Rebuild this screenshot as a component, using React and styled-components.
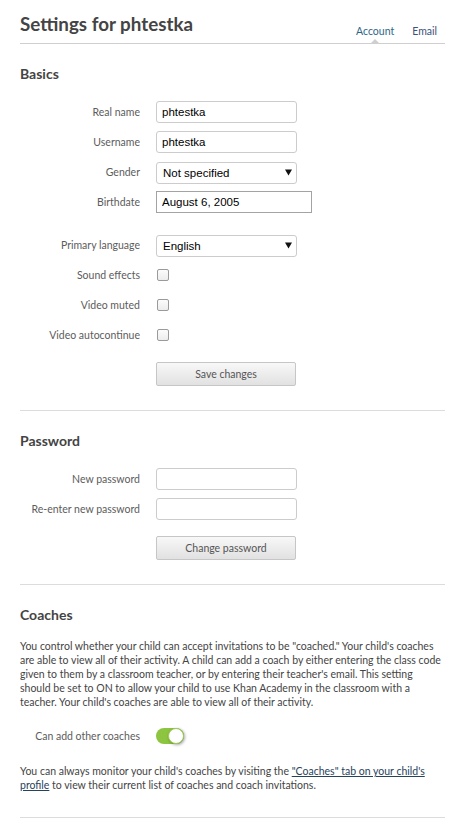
import React from "react";
import styled, { createGlobalStyle } from "styled-components";

const GlobalStyle = createGlobalStyle`
  html, body { margin: 0; padding: 0; background: #fff; }
  body { font-family: Lato, "Open Sans", sans-serif; color: #444; }
  * { box-sizing: border-box; }
`;

const Page = styled.div`
  padding: 0 14px 0 20px;
  width: 459px;
`;

const Header = styled.header`
  display: flex;
  justify-content: space-between;
  align-items: flex-end;
  height: 44px;
  border-bottom: 1px solid #cfcfcf;
  padding-top: 12px;
`;

const Title = styled.h1`
  margin: 0;
  align-self: flex-start;
  font-size: 18.8px;
  line-height: 24px;
  font-weight: 700;
  color: #444;
`;

const Tabs = styled.nav`
  display: flex;
  gap: 18px;
  margin-right: 8px;
`;

const Tab = styled.a`
  position: relative;
  display: block;
  font-size: 10.5px;
  line-height: 14px;
  padding-bottom: 5px;
  color: ${(p) => (p.$active ? "#2f6688" : "#3d5179")};
  text-decoration: none;
  &::after {
    content: "";
    display: ${(p) => (p.$active ? "block" : "none")};
    position: absolute;
    left: 50%;
    bottom: 0;
    transform: translateX(-50%);
    border-left: 4px solid transparent;
    border-right: 4px solid transparent;
    border-bottom: 4px solid #cfcfcf;
  }
`;

const Section = styled.section`
  padding: 21px 0 ${(p) => p.$bottom || 24}px;
  border-bottom: 1px solid #dcdcdc;
`;

const Heading = styled.h2`
  margin: 0 0 ${(p) => p.$gap || 18}px;
  font-size: 14px;
  line-height: 18px;
  font-weight: 700;
  color: #444;
`;

const Row = styled.div`
  display: grid;
  grid-template-columns: 120px auto;
  column-gap: 16px;
  align-items: center;
  height: ${(p) => p.$h || 22}px;
  margin-top: ${(p) => p.$top ?? 8}px;
`;

const Label = styled.label`
  text-align: right;
  font-size: 10.5px;
  line-height: 14px;
  color: #5c5c5c;
  white-space: nowrap;
`;

const TextInput = styled.input`
  width: ${(p) => p.$w || 141}px;
  height: 22px;
  border: 1px solid ${(p) => (p.$square ? "#a3a3a3" : "#cccccc")};
  border-radius: ${(p) => (p.$square ? 0 : 3)}px;
  padding: 0 5px;
  font-family: "Liberation Sans", Arial, sans-serif;
  font-size: 11.5px;
  color: #000;
  background: #fff;
  outline: none;
`;

const SelectWrap = styled.div`
  position: relative;
  width: 141px;
  height: 22px;
`;

const Select = styled.select`
  appearance: none;
  width: 100%;
  height: 100%;
  border: 1px solid #cccccc;
  border-radius: 3px;
  padding: 0 16px 0 6px;
  font-family: "Liberation Sans", Arial, sans-serif;
  font-size: 11.5px;
  color: #000;
  background: #fff;
  outline: none;
`;

const Arrow = styled.svg`
  position: absolute;
  right: 5px;
  top: 8px;
  width: 7px;
  height: 7px;
  pointer-events: none;
`;

const Check = styled.input.attrs({ type: "checkbox" })`
  appearance: none;
  margin: 0 0 0 1px;
  width: 12px;
  height: 12px;
  border: 1px solid #9a9a9a;
  border-radius: 2px;
  background: linear-gradient(#fbfbfb, #ececec);
`;

const Button = styled.button`
  width: 140px;
  height: 24px;
  margin-top: 16px;
  margin-left: 136px;
  display: block;
  border: 1px solid #c6c6c6;
  border-radius: 2px;
  background: linear-gradient(#f8f8f8, #e1e1e1);
  font-family: Lato, sans-serif;
  font-size: 10.5px;
  color: #555;
  padding: 0;
`;

const Para = styled.p`
  margin: ${(p) => p.$top || 0}px 0 0;
  font-size: 10.5px;
  line-height: 14px;
  color: #444;
`;

const Link = styled.a`
  color: #27435c;
  text-decoration: underline;
`;

const Toggle = styled.span`
  position: relative;
  display: block;
  width: 28px;
  height: 16px;
  border-radius: 8px;
  background: #8dc440;
`;

const Knob = styled.span`
  position: absolute;
  right: 0;
  top: 0;
  width: 16px;
  height: 16px;
  border-radius: 50%;
  background: #fff;
  border: 1px solid #9ccc5a;
  box-shadow: 1px 1px 3px rgba(0, 0, 0, 0.35);
`;

const SelectField = ({ value }) => (
  <SelectWrap>
    <Select defaultValue={value}>
      <option>{value}</option>
    </Select>
    <Arrow viewBox="0 0 7 7">
      <polygon points="0,0.5 7,0.5 3.5,6.5" fill="#111" />
    </Arrow>
  </SelectWrap>
);

export default function App() {
  return (
    <>
      <GlobalStyle />
      <Page>
        <Header>
          <Title>Settings for phtestka</Title>
          <Tabs>
            <Tab $active>Account</Tab>
            <Tab>Email</Tab>
          </Tabs>
        </Header>

        <Section>
          <Heading>Basics</Heading>
          <Row $top={0}>
            <Label>Real name</Label>
            <TextInput defaultValue="phtestka" />
          </Row>
          <Row>
            <Label>Username</Label>
            <TextInput defaultValue="phtestka" />
          </Row>
          <Row>
            <Label>Gender</Label>
            <SelectField value="Not specified" />
          </Row>
          <Row>
            <Label>Birthdate</Label>
            <TextInput $square $w={156} defaultValue="August 6, 2005" />
          </Row>
          <Row $top={21}>
            <Label>Primary language</Label>
            <SelectField value="English" />
          </Row>
          <Row>
            <Label>Sound effects</Label>
            <Check />
          </Row>
          <Row>
            <Label>Video muted</Label>
            <Check />
          </Row>
          <Row>
            <Label>Video autocontinue</Label>
            <Check />
          </Row>
          <Button>Save changes</Button>
        </Section>

        <Section>
          <Heading>Password</Heading>
          <Row $top={0}>
            <Label>New password</Label>
            <TextInput type="password" />
          </Row>
          <Row>
            <Label>Re-enter new password</Label>
            <TextInput type="password" />
          </Row>
          <Button>Change password</Button>
        </Section>

        <Section $bottom={25}>
          <Heading $gap={15}>Coaches</Heading>
          <Para>
            You control whether your child can accept invitations to be "coached." Your child's
            coaches are able to view all of their activity. A child can add a coach by either
            entering the class code given to them by a classroom teacher, or by entering their
            teacher's email. This setting should be set to ON to allow your child to use Khan
            Academy in the classroom with a teacher. Your child's coaches are able to view all of
            their activity.
          </Para>
          <Row $top={18} $h={18}>
            <Label>Can add other coaches</Label>
            <Toggle>
              <Knob />
            </Toggle>
          </Row>
          <Para $top={19}>
            You can always monitor your child's coaches by visiting the{" "}
            <Link>"Coaches" tab on your child's profile</Link> to view their current list of
            coaches and coach invitations.
          </Para>
        </Section>
      </Page>
    </>
  );
}
